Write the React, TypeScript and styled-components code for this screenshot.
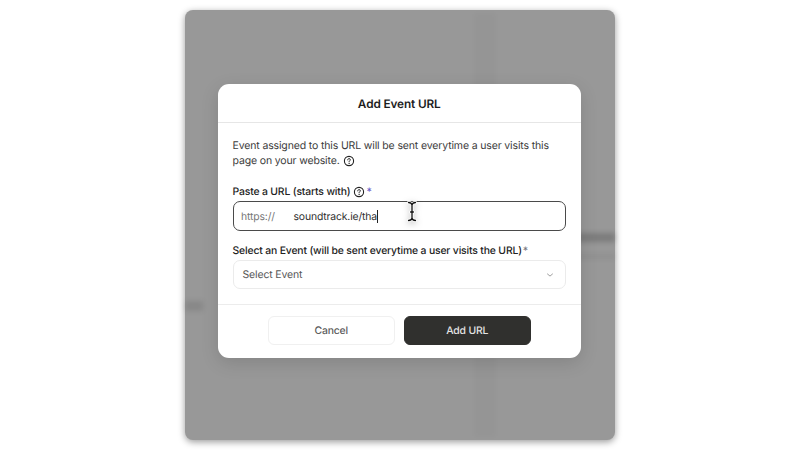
import styled, { createGlobalStyle } from "styled-components";

const GlobalStyle = createGlobalStyle`
  * {
    box-sizing: border-box;
  }
  body {
    margin: 0;
    background: #fff;
    font-family: Inter, "Liberation Sans", sans-serif;
    text-rendering: geometricPrecision;
    white-space: nowrap;
  }
`;

const HelpIcon = () => (
  <HelpSvg viewBox="0 0 12 12" fill="none" stroke="#222" strokeLinecap="round">
    <circle cx="6" cy="6" r="4.6" strokeWidth="1.1" />
    <path d="M4.7 4.9c0-.8.6-1.3 1.35-1.3s1.3.5 1.3 1.15c0 .9-1.3 1-1.3 1.95" strokeWidth="1" />
    <circle cx="6.05" cy="8.3" r=".3" strokeWidth=".5" fill="#222" />
  </HelpSvg>
);

export default function App() {
  return (
    <Page>
      <GlobalStyle />
      <Backdrop>
        <Streak $left={290} $top={4} $width={20} $height={422} $alpha={0.018} />
        <Streak $left={380} $top={223} $width={50} $height={9} $alpha={0.18} />
        <Streak $left={380} $top={244} $width={50} $height={5} $alpha={0.05} />
        <Streak $left={0} $top={291} $width={18} $height={10} $alpha={0.1} />
        <Modal>
          <Header>
            <Title>Add Event URL</Title>
          </Header>
          <Body>
            <Description>
              <span>Event assigned to this URL will be sent everytime a user visits this</span>
              <br />
              <span>page on your website.</span>
              <HelpIcon />
            </Description>
            <UrlLabel>
              <span>Paste a URL (starts with)</span>
              <HelpIcon />
              <Star>*</Star>
            </UrlLabel>
            <UrlField>
              <Prefix>https://</Prefix>
              <Value>soundtrack.ie/tha</Value>
              <Caret />
              <Cursor viewBox="0 0 20 28" fill="none" strokeLinecap="round">
                <path
                  d="M6.5 4.5Q9.4 4.7 10 6.8Q10.6 4.7 13.5 4.5M10 6.8V20.2M6.5 22.5Q9.4 22.3 10 20.2Q10.6 22.3 13.5 22.5M8.6 14H11.4"
                  stroke="#fff"
                  strokeWidth="3"
                />
                <path
                  d="M6.5 4.5Q9.4 4.7 10 6.8Q10.6 4.7 13.5 4.5M10 6.8V20.2M6.5 22.5Q9.4 22.3 10 20.2Q10.6 22.3 13.5 22.5M8.6 14H11.4"
                  stroke="#111"
                  strokeWidth="1.3"
                />
              </Cursor>
            </UrlField>
            <EventLabel>
              <span>Select an Event (will be sent everytime a user visits the URL)</span>
              <Star $muted>*</Star>
            </EventLabel>
            <SelectField>
              <span>Select Event</span>
              <Chevron viewBox="0 0 8 6" fill="none" stroke="#858585" strokeLinecap="round" strokeLinejoin="round">
                <path d="M1.5 2L4 4.1L6.5 2" strokeWidth=".8" />
              </Chevron>
            </SelectField>
          </Body>
          <Footer>
            <Button>Cancel</Button>
            <Button $primary>Add URL</Button>
          </Footer>
        </Modal>
      </Backdrop>
    </Page>
  );
}

const Page = styled.div`
  height: 450px;
  padding-top: 10px;
  display: flex;
  justify-content: center;
  align-items: flex-start;
  overflow: hidden;
`;

const Backdrop = styled.div`
  position: relative;
  width: 430px;
  height: 430px;
  padding: 74px 34px 0 32.5px;
  border-radius: 8px;
  background: #989898;
  box-shadow: 0 2px 7px rgba(0, 0, 0, 0.4);
`;

/* blurred remains of the page behind the dialog */
const Streak = styled.div<{ $left: number; $top: number; $width: number; $height: number; $alpha: number }>`
  position: absolute;
  left: ${(p) => p.$left}px;
  top: ${(p) => p.$top}px;
  width: ${(p) => p.$width}px;
  height: ${(p) => p.$height}px;
  background: rgba(0, 0, 0, ${(p) => p.$alpha});
  filter: blur(2.5px);
`;

const Modal = styled.div`
  position: relative;
  height: 273.5px;
  display: flex;
  flex-direction: column;
  border-radius: 11px;
  background: #fff;
  box-shadow: 0 5px 18px rgba(0, 0, 0, 0.13);
`;

const Header = styled.div`
  height: 39px;
  display: flex;
  align-items: center;
  justify-content: center;
  border-bottom: 1px solid #e6e6e6;
`;

const Title = styled.h1`
  margin: 1px 0 0;
  font-size: 11.8px;
  font-weight: 600;
  letter-spacing: -0.12px;
  color: #1d1d1d;
`;

const Body = styled.div`
  flex: 1;
  padding: 14.5px 15px 0;
`;

const Description = styled.p`
  margin: 0;
  font-size: 10.5px;
  letter-spacing: -0.14px;
  line-height: 15px;
  color: #3c3c3c;
`;

const HelpSvg = styled.svg`
  width: 12px;
  height: 12px;
  margin-left: 3px;
  vertical-align: -3px;
`;

const UrlLabel = styled.div`
  height: 15px;
  margin-top: 16.5px;
  display: flex;
  align-items: center;
  font-size: 10.4px;
  font-weight: 500;
  letter-spacing: -0.16px;
  color: #222;
`;

const EventLabel = styled(UrlLabel)`
  margin-top: 12px;
`;

const Star = styled.span<{ $muted?: boolean }>`
  margin-left: 1px;
  color: ${(p) => (p.$muted ? "#77777f" : "#6660c8")};
`;

const Field = styled.div`
  display: flex;
  align-items: center;
  margin-top: 2px;
  border-radius: 7px;
  letter-spacing: -0.15px;
`;

const UrlField = styled(Field)`
  position: relative;
  height: 30px;
  padding: 0 0 0 7.5px;
  border: 1px solid #4a4a4a;
  font-size: 10.4px;
`;

const Prefix = styled.span`
  width: 52.5px;
  color: #777;
`;

const Value = styled.span`
  color: #303030;
`;

const Caret = styled.i`
  width: 1px;
  height: 13px;
  background: #222;
`;

const Cursor = styled.svg`
  position: absolute;
  left: 168px;
  top: -4px;
  width: 20px;
  height: 28px;
  filter: drop-shadow(0 2px 3px rgba(0, 0, 0, 0.25));
`;

const SelectField = styled(Field)`
  height: 29px;
  padding: 0 11px 0 9px;
  justify-content: space-between;
  border: 1px solid #ebebeb;
  font-size: 10.5px;
  color: #585858;
`;

const Chevron = styled.svg`
  width: 8px;
  height: 6px;
`;

const Footer = styled.div`
  height: 53.5px;
  padding-top: 11px;
  display: flex;
  justify-content: center;
  gap: 9px;
  border-top: 1px solid #ececec;
`;

const Button = styled.button<{ $primary?: boolean }>`
  width: 127px;
  height: 29px;
  padding: 0;
  border: 1px solid ${(p) => (p.$primary ? "#30302e" : "#f0f0f0")};
  border-radius: 6px;
  background: ${(p) => (p.$primary ? "#30302e" : "#fff")};
  color: ${(p) => (p.$primary ? "#e4e4e4" : "#5c5c5c")};
  font-family: inherit;
  font-size: 10.4px;
  font-weight: 500;
  letter-spacing: -0.15px;
  text-rendering: inherit;
`;
